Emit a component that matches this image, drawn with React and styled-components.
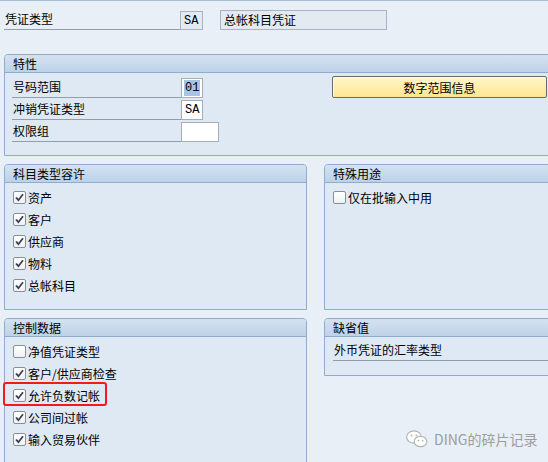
import React from "react";
import styled, { createGlobalStyle } from "styled-components";

const GlobalStyle = createGlobalStyle`
  html, body { margin: 0; padding: 0; }
  body {
    background: #e9eff6;
    font-family: "Noto Sans CJK SC", "Liberation Sans", sans-serif;
    font-size: 12px;
    color: #000;
    overflow: hidden;
  }
`;

const Page = styled.div`
  position: relative;
  width: 548px;
  height: 462px;
  overflow: hidden;
  box-sizing: border-box;
  border-top: 1px solid #a9bdd3;
  padding-left: 4px;
`;

const TopRow = styled.div`
  display: flex;
  align-items: flex-end;
  padding-top: 9px;
  height: 20px;
`;

const Label = styled.div`
  box-sizing: border-box;
  width: ${(p) => p.$w}px;
  height: 20px;
  line-height: 18px;
  padding-left: ${(p) => p.$pad || 1}px;
  border-bottom: 1px solid #939eab;
  white-space: nowrap;
`;

const Field = styled.div`
  box-sizing: border-box;
  width: ${(p) => p.$w}px;
  height: ${(p) => p.$h || 20}px;
  margin-left: ${(p) => p.$ml || 0}px;
  border: 1px solid ${(p) => (p.$readonly ? "#a5b3c2" : "#a7aeb6")};
  background: ${(p) => (p.$readonly ? "#e3eaf2" : "#ffffff")};
  font-family: ${(p) => (p.$mono ? '"Liberation Mono", monospace' : 'inherit')};
  font-size: 12px;
  line-height: 18px;
  padding-left: 3px;
  white-space: nowrap;
  display: flex;
  align-items: center;
`;

const Selected = styled.span`
  background: #a9c3e2;
  line-height: 16px;
  padding: 0 1px;
  margin-left: -1px;
`;

const Section = styled.section`
  box-sizing: border-box;
  height: ${(p) => p.$h}px;
  margin-top: ${(p) => p.$mt || 0}px;
  border: 1px solid #8eaccc;
  border-radius: 4px 4px 0 0;
  background: #dfe9f3;
  display: flex;
  flex-direction: column;
`;

const WideSection = styled(Section)`
  width: 560px;
`;

const SectionHead = styled.div`
  height: 17px;
  line-height: 17px;
  padding-left: 8px;
  background: linear-gradient(#d4e2f0, #bdd2e8);
  border-bottom: 1px solid #8eaccc;
  border-radius: 3px 3px 0 0;
  flex: none;
`;

const FeatureBody = styled.div`
  display: grid;
  grid-template-columns: 320px 216px;
  padding: 4px 0 0 7px;
`;

const FieldStack = styled.div`
  display: flex;
  flex-direction: column;
  gap: 1px;
`;

const FieldRow = styled.div`
  display: flex;
  align-items: flex-end;
  height: 21px;
`;

const YellowButton = styled.button`
  box-sizing: border-box;
  width: 215px;
  height: 22px;
  margin-top: -1px;
  border: 1px solid #6b6b6b;
  border-radius: 2px;
  background: linear-gradient(#fff6cc, #ffe68f);
  font-family: inherit;
  font-size: 12px;
  color: #000;
  padding: 0;
  box-shadow: inset 1px 1px 0 #fffbe6;
`;

const Columns = styled.div`
  display: grid;
  grid-template-columns: 303px 260px;
  column-gap: 17px;
  margin-top: ${(p) => p.$mt}px;
  align-items: start;
`;

const CheckList = styled.div`
  display: flex;
  flex-direction: column;
  padding: ${(p) => p.$pt || 3}px 0 0 8px;
`;

const CheckRow = styled.div`
  position: relative;
  display: flex;
  align-items: center;
  height: 22px;
  white-space: nowrap;
  &::after {
    content: "";
    display: ${(p) => (p.$highlight ? "block" : "none")};
    position: absolute;
    left: -10px;
    top: -2px;
    width: 104px;
    height: 24px;
    box-sizing: border-box;
    border: 2.5px solid #f21b1b;
    border-radius: 3px;
  }
`;

const Box = styled.span`
  box-sizing: border-box;
  width: 13px;
  height: 13px;
  margin-right: 2px;
  border: 1px solid #8b8f95;
  border-radius: 2px;
  background: linear-gradient(#ffffff, #eef1f4);
  display: flex;
  align-items: center;
  justify-content: center;
  flex: none;
`;

const DefaultBody = styled.div`
  padding: 4px 0 0 8px;
`;

const Watermark = styled.div`
  position: absolute;
  left: 406px;
  top: 428px;
  display: flex;
  align-items: center;
  gap: 6px;
  color: #9b9da0;
  font-size: 14px;
  white-space: nowrap;
`;

function Check({ checked }) {
  return (
    <Box>
      {checked && (
        <svg width="9" height="9" viewBox="0 0 9 9">
          <path d="M1 4.5 L3.4 7.2 L8 1.2" fill="none" stroke="#3b3d52" strokeWidth="1.8" />
        </svg>
      )}
    </Box>
  );
}

function CheckItem({ checked, children, highlight }) {
  return (
    <CheckRow $highlight={highlight}>
      <Check checked={checked} />
      {children}
    </CheckRow>
  );
}

function WeChatIcon() {
  return (
    <svg width="22" height="18" viewBox="0 0 22 18">
      <ellipse cx="8" cy="7" rx="7.3" ry="6.2" fill="#fff" stroke="#b3b5b8" strokeWidth="1.2" />
      <circle cx="5.5" cy="5.6" r="1" fill="#b3b5b8" />
      <circle cx="10.5" cy="5.6" r="1" fill="#b3b5b8" />
      <ellipse cx="14.5" cy="11.5" rx="6.3" ry="5.2" fill="#fff" stroke="#b3b5b8" strokeWidth="1.2" />
      <circle cx="12.4" cy="10.6" r="0.9" fill="#b3b5b8" />
      <circle cx="16.6" cy="10.6" r="0.9" fill="#b3b5b8" />
    </svg>
  );
}

export default function App() {
  return (
    <>
      <GlobalStyle />
      <Page>
        <TopRow>
          <Label $w={176}>凭证类型</Label>
          <Field $w={23} $h={19} $readonly $mono>SA</Field>
          <Field $w={167} $ml={17} $readonly>总帐科目凭证</Field>
        </TopRow>

        <WideSection $h={102} $mt={24}>
          <SectionHead>特性</SectionHead>
          <FeatureBody>
            <FieldStack>
              <FieldRow>
                <Label $w={169}>号码范围</Label>
                <Field $w={22} $mono><Selected>01</Selected></Field>
              </FieldRow>
              <FieldRow>
                <Label $w={169}>冲销凭证类型</Label>
                <Field $w={22} $mono>SA</Field>
              </FieldRow>
              <FieldRow>
                <Label $w={169}>权限组</Label>
                <Field $w={38} />
              </FieldRow>
            </FieldStack>
            <div>
              <YellowButton>数字范围信息</YellowButton>
            </div>
          </FeatureBody>
        </WideSection>

        <Columns $mt={8}>
          <Section $h={146}>
            <SectionHead>科目类型容许</SectionHead>
            <CheckList>
              <CheckItem checked>资产</CheckItem>
              <CheckItem checked>客户</CheckItem>
              <CheckItem checked>供应商</CheckItem>
              <CheckItem checked>物料</CheckItem>
              <CheckItem checked>总帐科目</CheckItem>
            </CheckList>
          </Section>
          <Section $h={146}>
            <SectionHead>特殊用途</SectionHead>
            <CheckList>
              <CheckItem>仅在批输入中用</CheckItem>
            </CheckList>
          </Section>
        </Columns>

        <Columns $mt={8}>
          <Section $h={160}>
            <SectionHead>控制数据</SectionHead>
            <CheckList>
              <CheckItem>净值凭证类型</CheckItem>
              <CheckItem checked>客户/供应商检查</CheckItem>
              <CheckItem checked highlight>允许负数记帐</CheckItem>
              <CheckItem checked>公司间过帐</CheckItem>
              <CheckItem checked>输入贸易伙伴</CheckItem>
            </CheckList>
          </Section>
          <Section $h={58}>
            <SectionHead>缺省值</SectionHead>
            <DefaultBody>
              <Label $w={260}>外币凭证的汇率类型</Label>
            </DefaultBody>
          </Section>
        </Columns>

        <Watermark>
          <WeChatIcon />
          DING的碎片记录
        </Watermark>
      </Page>
    </>
  );
}
